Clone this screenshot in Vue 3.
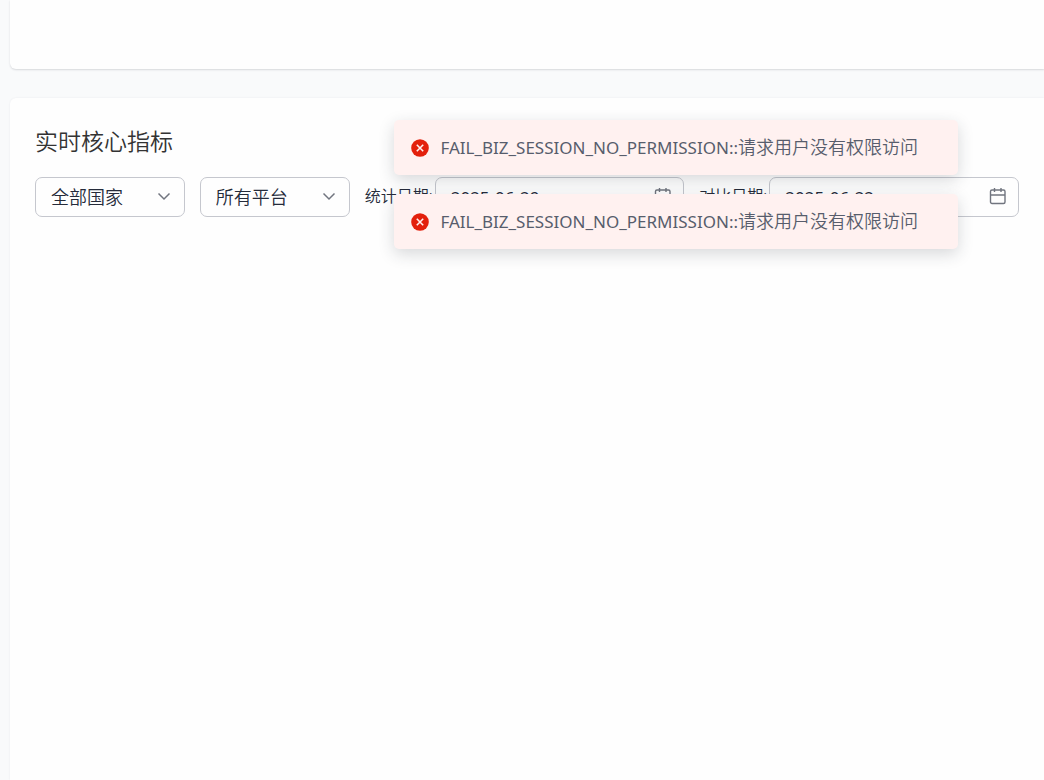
<script setup>
import { ref } from 'vue'

const country = ref('all')
const platform = ref('all')
const dates = ref([
  { id: 'stat-date', label: '统计日期:', value: '2025-06-29' },
  { id: 'compare-date', label: '对比日期:', value: '2025-06-22' },
])
const toasts = [
  { id: 1, code: 'FAIL_BIZ_SESSION_NO_PERMISSION::', text: '请求用户没有权限访问' },
  { id: 2, code: 'FAIL_BIZ_SESSION_NO_PERMISSION::', text: '请求用户没有权限访问' },
]
</script>

<template>
  <div class="page">
    <section class="card previous"></section>
    <section class="card metrics">
      <h2 class="title">实时核心指标</h2>
      <form class="filters" @submit.prevent>
        <div class="select">
          <select v-model="country" aria-label="国家">
            <option value="all">全部国家</option>
          </select>
          <svg class="chevron" viewBox="0 0 14 14" aria-hidden="true"><path d="M1.500 4.500 7 10l5.500-5.500" /></svg>
        </div>
        <div class="select">
          <select v-model="platform" aria-label="平台">
            <option value="all">所有平台</option>
          </select>
          <svg class="chevron" viewBox="0 0 14 14" aria-hidden="true"><path d="M1.500 4.500 7 10l5.500-5.500" /></svg>
        </div>
        <div v-for="d in dates" :key="d.id" class="date">
          <label :for="d.id">{{ d.label }}</label>
          <div class="field">
            <input :id="d.id" v-model="d.value" type="text" />
            <svg class="calendar" viewBox="0 0 18 18" aria-hidden="true">
              <rect x="1.500" y="3" width="14.500" height="13.500" rx="1.500" />
              <path d="M1.500 8h14.500M5.500 1v4M12 1v4" />
            </svg>
          </div>
        </div>
      </form>
    </section>

    <div class="toasts">
      <div v-for="t in toasts" :key="t.id" class="toast" role="alert">
        <svg class="error" viewBox="0 0 18 18" aria-hidden="true">
          <circle cx="9" cy="9" r="8.800" />
          <path d="m5.800 5.800 6.400 6.400M12.200 5.800l-6.400 6.400" />
        </svg>
        <p><span class="code">{{ t.code }}</span>{{ t.text }}</p>
      </div>
    </div>
  </div>
</template>

<style>
body {
  background: #f9fafb;
}
</style>

<style scoped>
.page {
  display: flex;
  flex-direction: column;
  gap: 29px;
  min-height: 100vh;
  padding-left: 10px;
  box-sizing: border-box;
  position: relative;
  overflow: hidden;
  color: #252b3a;
  font-family: "Noto Sans", "Noto Sans CJK SC", sans-serif;
  font-size: 18px;
}
.card {
  background: #fefefe;
  box-shadow: 0 1px 2px rgba(37, 43, 58, 0.16);
}
.previous {
  height: 69px;
  border-radius: 0 0 0 6px;
}
.metrics {
  flex: 1;
  padding: 25px;
  border-radius: 6px 0 0 0;
  box-shadow: 0 0 2px rgba(37, 43, 58, 0.08);
}
.title {
  margin: 0 0 18px;
  font-size: 23px;
  line-height: 36px;
  font-weight: 350;
  color: #333;
}
.filters {
  display: flex;
  gap: 15px;
}
.select,
.field {
  position: relative;
}
.select {
  flex: 0 1 150px;
}
select,
input {
  display: block;
  width: 100%;
  height: 40px;
  box-sizing: border-box;
  margin: 0;
  padding: 0 40px 0 15px;
  border: 1px solid #c5c7ce;
  border-radius: 7px;
  background: #fefefe;
  color: #252b3a;
  font: inherit;
  font-weight: 350;
  appearance: none;
  outline: none;
}
input {
  font-size: 17px;
  font-weight: 400;
}
.date {
  display: flex;
  flex: 0 1 320px;
}
.date label {
  flex: 0 0 70px;
  font-size: 16px;
  line-height: 38px;
  font-weight: 350;
  white-space: nowrap;
}
.field {
  flex: 1;
}
svg {
  fill: none;
  stroke: #71757f;
}
.chevron {
  position: absolute;
  right: 14px;
  top: 12px;
  width: 14px;
  height: 14px;
  stroke-width: 1.5;
  pointer-events: none;
}
.calendar {
  position: absolute;
  right: 12px;
  top: 10px;
  width: 18px;
  height: 18px;
  stroke-width: 1.4;
}
.toasts {
  position: absolute;
  top: 120px;
  right: 86px;
  display: flex;
  flex-direction: column;
  gap: 19px;
}
.toast {
  display: flex;
  align-items: center;
  gap: 11px;
  padding: 14px 40px 14px 17px;
  border-radius: 5px;
  background: #fff1f0;
  box-shadow: 0 5px 16px rgba(37, 43, 58, 0.18);
  color: #575d6c;
  font-weight: 350;
  line-height: 27px;
  white-space: nowrap;
}
.toast p {
  margin: 0;
}
.code {
  font-size: 17px;
  font-weight: 400;
}
.error {
  width: 18px;
  height: 18px;
}
.error circle {
  fill: #e3200c;
  stroke: none;
}
.error path {
  stroke: #fff1f0;
  stroke-width: 1.6;
}
</style>
